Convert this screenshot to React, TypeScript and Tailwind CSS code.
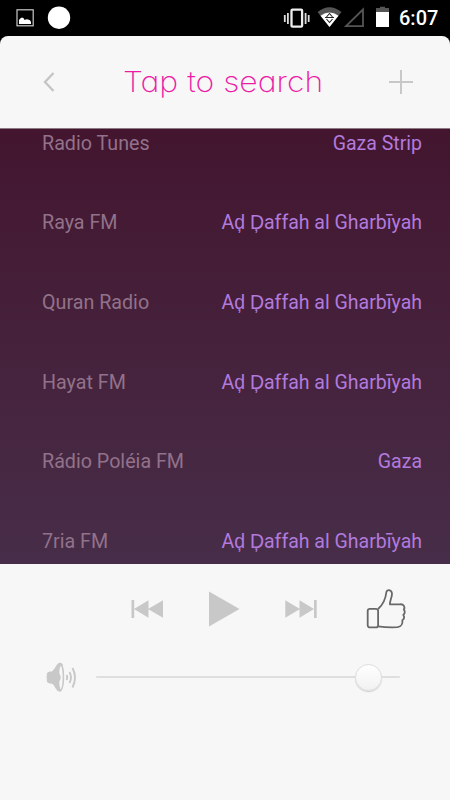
const stations = [
  { name: 'Radio Tunes', region: 'Gaza Strip' },
  { name: 'Raya FM', region: 'Aḑ Ḑaffah al Gharbīyah' },
  { name: 'Quran Radio', region: 'Aḑ Ḑaffah al Gharbīyah' },
  { name: 'Hayat FM', region: 'Aḑ Ḑaffah al Gharbīyah' },
  { name: 'Rádio Poléia FM', region: 'Gaza' },
  { name: '7ria FM', region: 'Aḑ Ḑaffah al Gharbīyah' },
];

function StatusBar() {
  return (
    <div className="flex h-9 shrink-0 items-center pl-4 pr-[11px]">
      <svg className="h-9 w-[60px]" viewBox="16 0 60 36">
        <rect x="17" y="9.800" width="16.200" height="16" fill="none" stroke="#c9c9c9" strokeWidth="1.200" />
        <path d="M19 24v-4q1-2 3-2.500 2 0 2.600 2.500 2-1 3.400-.5 2.500.2 3 2.500v2z" fill="#fff" />
        <circle cx="59" cy="17.700" r="11.200" fill="#fff" />
      </svg>
      <svg className="ml-auto h-9 w-[110px]" viewBox="282 0 110 36">
        <rect x="291.500" y="9.700" width="10.600" height="17" rx="1" fill="none" stroke="#eee" strokeWidth="2.300" />
        <path d="M284.800 15v7M287.900 13v11M305.600 13v11M308.700 15v7" stroke="#ddd" strokeWidth="1.800" />
        <path d="M317.500 12Q329.500 2.500 341.500 12L329.500 27z" fill="#555" />
        <path d="M320.500 15.800Q329.500 9 338.500 15.800L329.500 27z" fill="#fff" />
        <path d="M325 17.500h9M326.500 17l3-3.500 3 3.500M326.500 19l3 3.500 3-3.500" fill="none" stroke="#222" strokeWidth="1.100" />
        <path d="M346 26.200L363 9.500V26.200z" fill="none" stroke="#555" strokeWidth="1.800" />
        <path d="M376 8h4V6.700h5V8h4v4h-13z" fill="#555" />
        <path d="M376 12h13v15h-13z" fill="#fff" />
      </svg>
      <span className="ml-[7px] w-10 text-[20px] leading-9 font-medium whitespace-nowrap text-white">6:07</span>
    </div>
  );
}

function Header() {
  return (
    <header className="flex h-[93px] shrink-0 items-center justify-between rounded-t-lg border-b border-[#8b7a82] bg-[#f7f7f7] pr-9 pl-[35px]">
      <button aria-label="Back" className="grid h-10 w-7 place-items-center">
        <svg width="12" height="22" viewBox="0 0 12 22" fill="none" stroke="#c5c5c5" strokeWidth="2.400">
          <path d="M10.500 2L2 11l8.500 9" />
        </svg>
      </button>
      <h1 className="mr-[5px] w-[200px] origin-left scale-x-[1.100] font-['Inter',sans-serif] text-[29px] leading-10 font-extralight whitespace-nowrap text-[#ec1ba6] [font-feature-settings:'cv11']">
        Tap to search
      </h1>
      <button aria-label="Add" className="grid h-10 w-[26px] place-items-center">
        <svg width="24" height="24" viewBox="0 0 24 24" stroke="#c8c8c8" strokeWidth="2">
          <path d="M12 0v24M0 12h24" />
        </svg>
      </button>
    </header>
  );
}

function StationList() {
  return (
    <main className="h-[435px] shrink-0 overflow-hidden bg-linear-to-b from-[#43152f] to-[#472d49]">
      <ul className="-mt-[25px]">
        {stations.map((s) => (
          <li key={s.name} className="flex h-[79.600px] items-center justify-between pr-[28px] pl-[42px] leading-[30px]">
            <span className="text-[19.700px] text-[#92728a]">{s.name}</span>
            <span className="text-[19.500px] text-[#b27add]">{s.region}</span>
          </li>
        ))}
      </ul>
    </main>
  );
}

function Player() {
  return (
    <footer className="flex-1 bg-[#f7f7f7] pt-6">
      <div className="flex h-[42px] items-center pl-[131px] text-[#c8c8c8]">
        <button aria-label="Previous">
          <svg width="33" height="20" viewBox="0 0 33 20" fill="currentColor">
            <path d="M.5 1H3.200v18H.5zM3 10L17.500 1.200v17.600zM17 10L32 1.200v17.600z" />
          </svg>
        </button>
        <button aria-label="Play" className="ml-[45px]">
          <svg width="31" height="36" viewBox="0 0 31 36" fill="currentColor">
            <path d="M0 .5L30.500 18 0 35.500z" />
          </svg>
        </button>
        <button aria-label="Next" className="ml-[45px]">
          <svg width="33" height="20" viewBox="0 0 33 20" fill="currentColor">
            <path d="M29 1h2.700v18H29zM.3 1.200L15 10 .3 18.800zM14.500 1.200L29 10l-14.500 8.800z" />
          </svg>
        </button>
        <button aria-label="Like" className="ml-[48px]">
          <svg width="42" height="42" viewBox="0 0 42 42" fill="none" stroke="#686868" strokeWidth="1.800" strokeLinejoin="round">
            <rect x="1.700" y="20.800" width="10.400" height="18.600" rx="2.200" />
            <path d="M12.100 21C16 17.500 19.500 12 20.300 4.500C20.500 1.200 25.500 1.400 26 5.500C26.200 9.500 23.500 13 23.900 16.300H34C37.500 15.800 39.500 18.800 37.800 21.700C39.300 23.200 39 25.500 37.300 27C38.500 28.800 38 31 36.400 32.300C36.700 35 35.500 38.700 31.500 39.200C25 39.500 18 39.200 12.100 38.400" />
          </svg>
        </button>
      </div>
      <div className="mt-[31px] flex h-8 items-center pl-[46px]">
        <svg width="32" height="32" viewBox="0 0 32 32" fill="#c8c8c8" stroke="#c8c8c8">
          <path d="M1.500 12Q4 10.500 6 11Q9.500 7.500 11.500 3.500Q14 1 16 3Q18 9 17.700 17Q17.500 26 15 30Q12 31 10.500 28Q8.500 24 6 22Q3.500 22.500 1.500 21Q.7 16 1.500 12z" strokeWidth="1" />
          <path d="M15 4.500Q16.900 9 16.600 18Q16.200 26 14.800 28.500Q13.200 26 13.300 20.500Q16 16.500 13.300 12.500Q13.200 7 15 4.500z" fill="#f7f7f7" stroke="none" />
          <path d="M20.500 14q1.500 2.500 0 5M23.500 11q3 5.500 0 11M26.500 7q5 9.500 0 19.500" fill="none" strokeWidth="1.900" />
        </svg>
        <div className="relative ml-[18px] h-[2px] w-[304px] rounded-full bg-[#dfdfdf]">
          <div className="absolute -top-[12.500px] left-[259px] h-[27px] w-[27px] rounded-full border border-[#dedede] bg-linear-to-b from-white to-[#f1f1f1] shadow-[0_1px_1px_#cfcfcf]" />
        </div>
      </div>
    </footer>
  );
}

export default function App() {
  return (
    <div className="flex h-[800px] w-[450px] flex-col overflow-hidden bg-black font-['Roboto',sans-serif]">
      <StatusBar />
      <Header />
      <StationList />
      <Player />
    </div>
  );
}
